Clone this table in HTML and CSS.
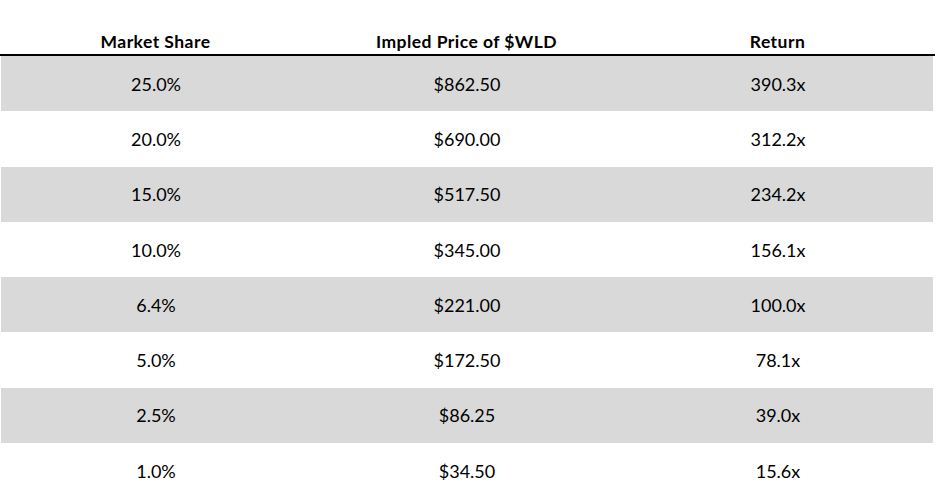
FILE: index.html
```html
<!DOCTYPE html>
<html>
<head>
<meta charset="utf-8">
<link rel="stylesheet" href="styles.css">
</head>
<body>
<div class="table">
  <div class="head">
    <div class="cell">Market Share</div>
    <div class="cell">Impled Price of $WLD</div>
    <div class="cell">Return</div>
  </div>
  <div class="row shade"><div class="cell">25.0%</div><div class="cell">$862.50</div><div class="cell">390.3x</div></div>
  <div class="row"><div class="cell">20.0%</div><div class="cell">$690.00</div><div class="cell">312.2x</div></div>
  <div class="row shade"><div class="cell">15.0%</div><div class="cell">$517.50</div><div class="cell">234.2x</div></div>
  <div class="row"><div class="cell">10.0%</div><div class="cell">$345.00</div><div class="cell">156.1x</div></div>
  <div class="row shade"><div class="cell">6.4%</div><div class="cell">$221.00</div><div class="cell">100.0x</div></div>
  <div class="row"><div class="cell">5.0%</div><div class="cell">$172.50</div><div class="cell">78.1x</div></div>
  <div class="row shade"><div class="cell">2.5%</div><div class="cell">$86.25</div><div class="cell">39.0x</div></div>
  <div class="row"><div class="cell">1.0%</div><div class="cell">$34.50</div><div class="cell">15.6x</div></div>
</div>
</body>
</html>
```
FILE: styles.css
```css
html, body {
  margin: 0;
  padding: 0;
  background: #ffffff;
}
body {
  font-family: Lato, "Open Sans", sans-serif;
  color: #000000;
}
.table {
  width: 936px;
}
.head {
  height: 54px;
  display: grid;
  grid-template-columns: repeat(3, 311px);
  align-items: end;
  border-bottom: 2px solid #000000;
  width: 935px;
  box-sizing: content-box;
}
.head .cell {
  font-weight: bold;
  font-size: 17.5px;
  letter-spacing: 0.45px;
  line-height: 20px;
  padding-bottom: 2px;
  text-align: center;
}
.row {
  height: 55.3px;
  display: grid;
  grid-template-columns: repeat(3, 311px);
  align-items: center;
  margin-left: 1px;
  width: 932px;
}
.row .cell {
  font-size: 18px;
  line-height: 20px;
  text-align: center;
  margin-left: -1px;
}
.shade {
  background: #d9d9d9;
}
```
